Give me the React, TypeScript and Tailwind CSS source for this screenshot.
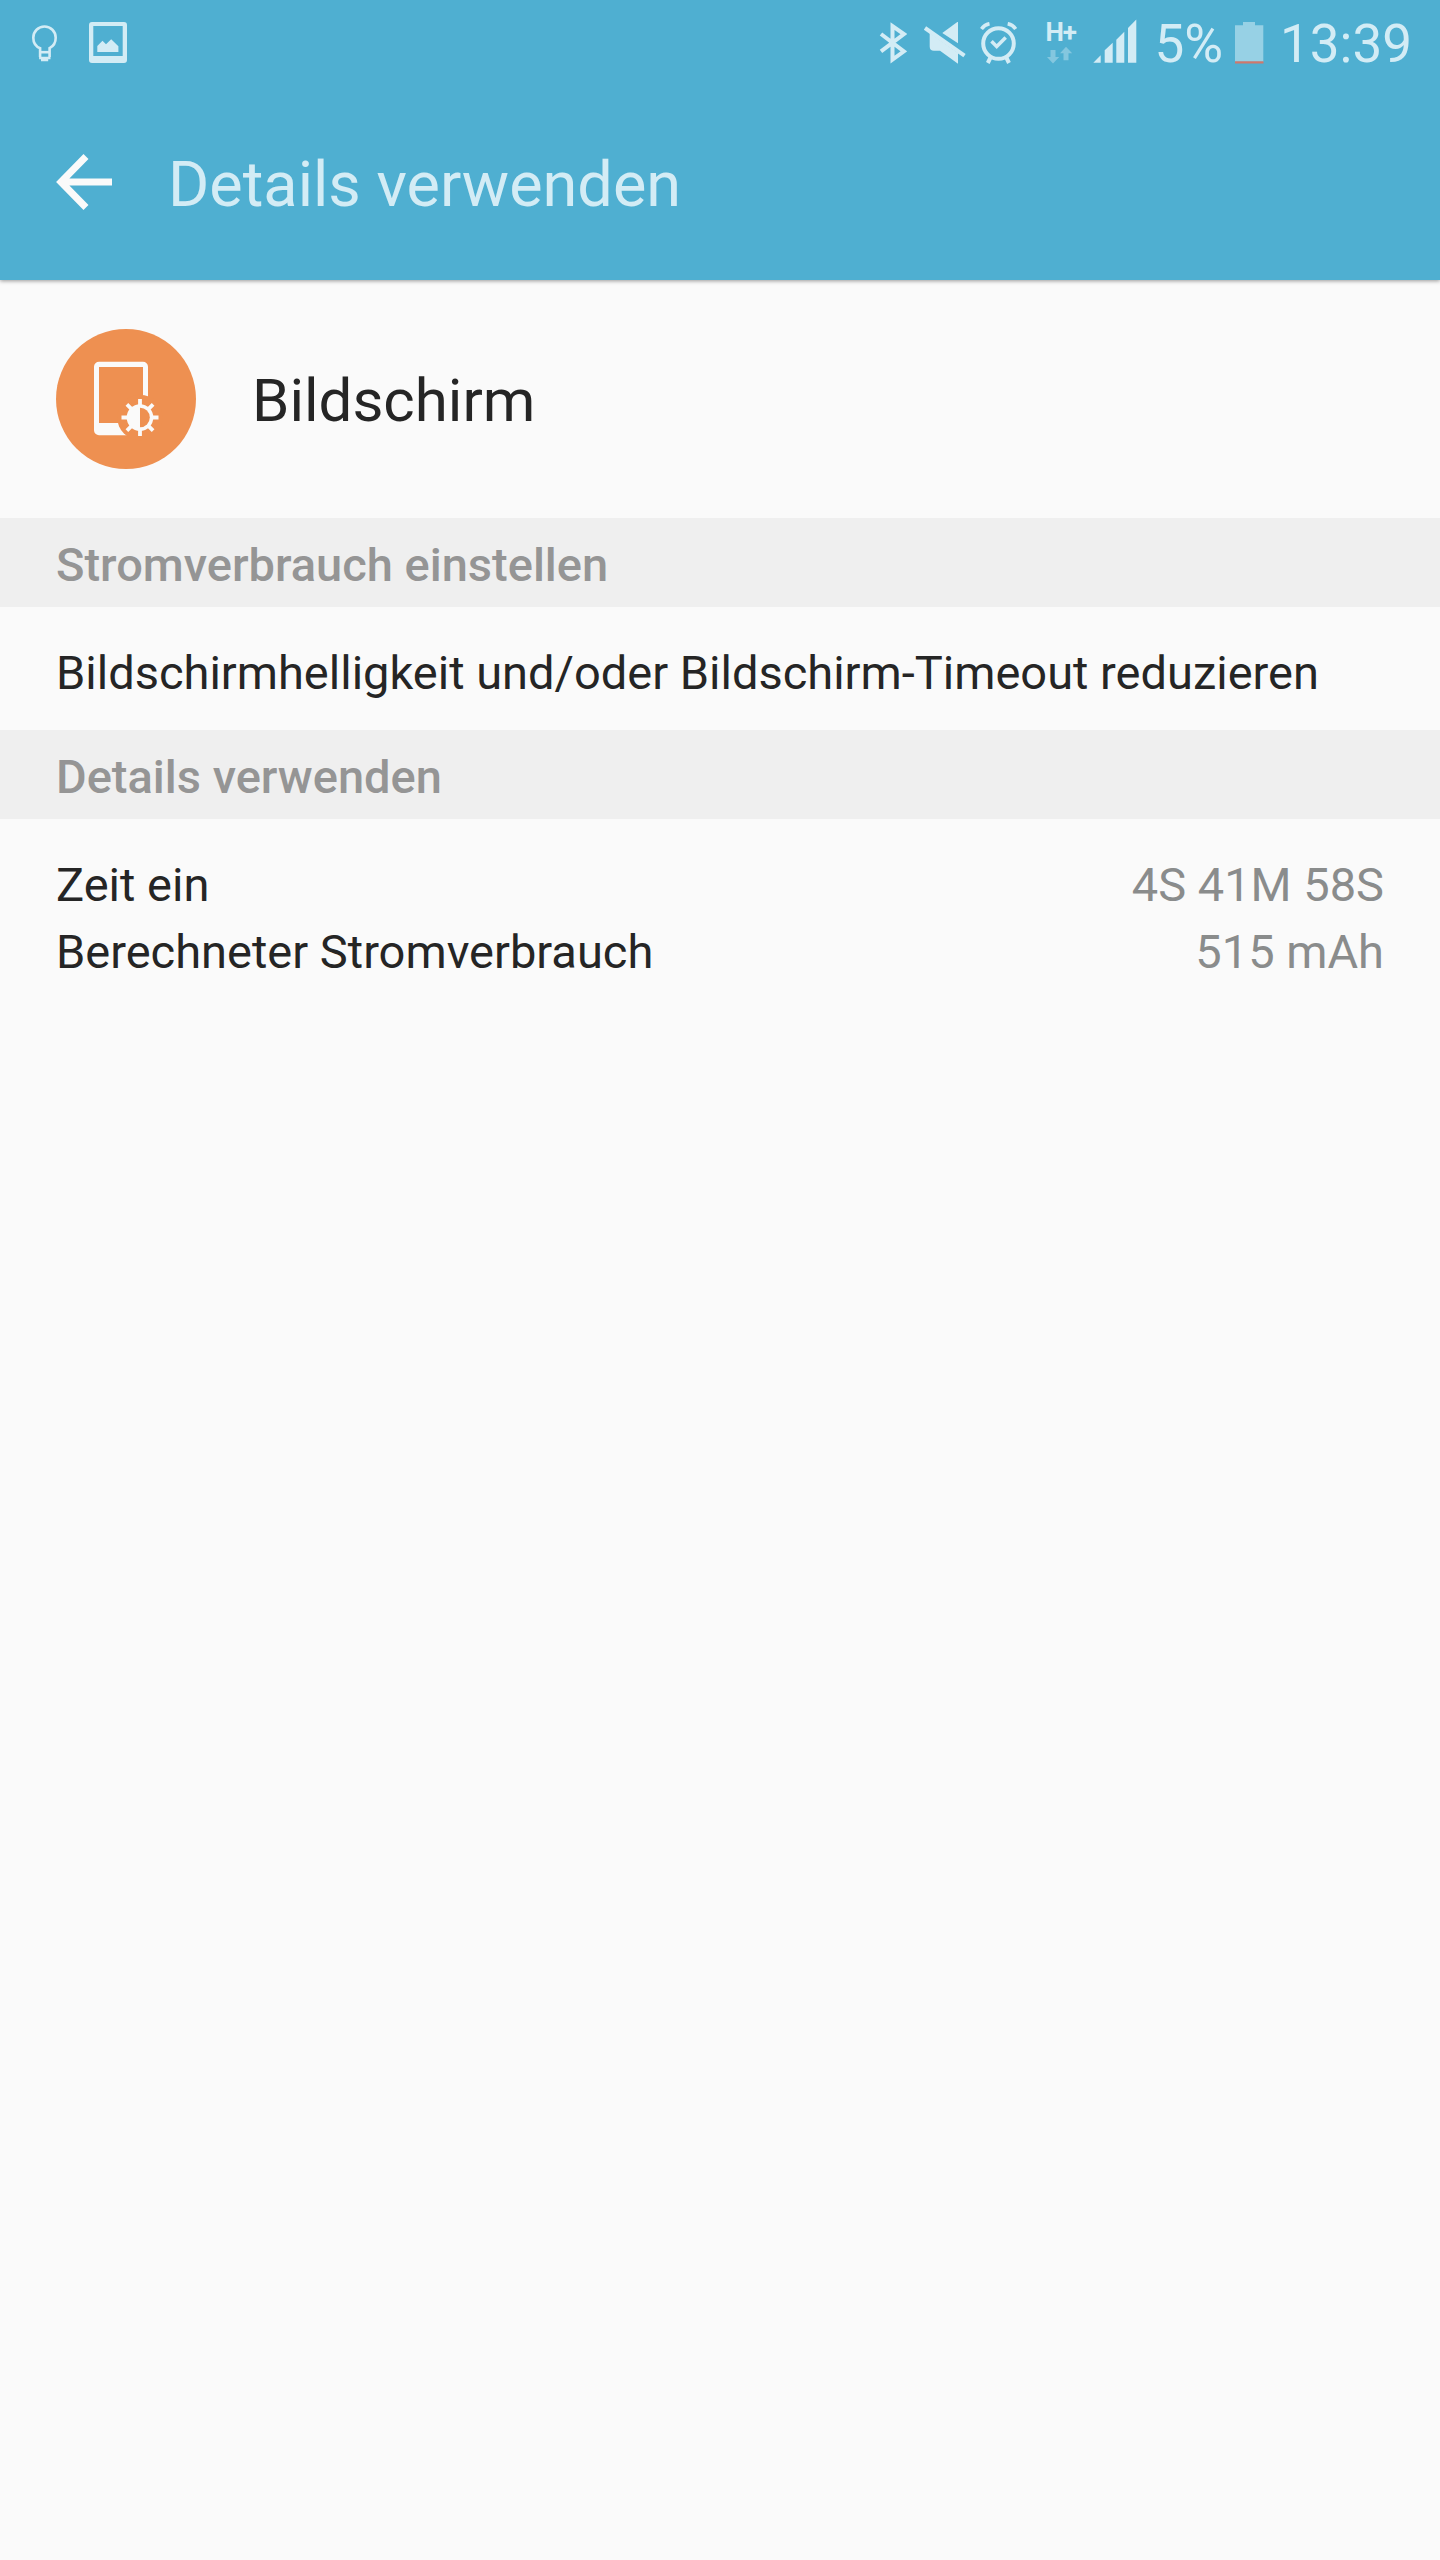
import React from 'react';

interface DetailRow {
  label: string;
  value: string;
}

const details: DetailRow[] = [
  { label: 'Zeit ein', value: '4S 41M 58S' },
  { label: 'Berechneter Stromverbrauch', value: '515 mAh' },
];

const BulbIcon = () => (
  <svg className="h-[38px] w-[26px]" viewBox="0 0 26 38" fill="none" stroke="currentColor" strokeWidth="2.6">
    <path d="M8.1 33V24.2C4 22.5 1.3 18.7 1.3 13.7a11.2 11.2 0 0 1 22.4 0c0 4.9-2.8 8.7-6.1 10.4V33" />
    <path d="M8 28.2h10" />
    <path d="M7.1 34h11.4M9 36h7.2" />
  </svg>
);

const ImageIcon = () => (
  <svg className="ml-[31px] h-[42px] w-[38px]" viewBox="0 0 38 42" fill="currentColor">
    <path fillRule="evenodd" d="M3 0h32a3 3 0 0 1 3 3v35a3 3 0 0 1-3 3H3a3 3 0 0 1-3-3V3a3 3 0 0 1 3-3zM4.3 4v30h29.4V4z" />
    <path d="M8.3 30v-6l5.2-5.2 3.5 3.4 5.2-5 7.2 7V30z" />
  </svg>
);

const BluetoothIcon = () => (
  <svg className="h-[42px] w-7" viewBox="879 22 28 42" fill="none" stroke="currentColor" strokeWidth="4">
    <path d="M881 34l22.9 17.3-11.4 8.2V26l11.4 8L881 51.3" strokeMiterlimit="10" />
  </svg>
);

const MuteIcon = () => (
  <svg className="ml-4 h-[42px] w-[43px]" viewBox="923 22 43 42" fill="currentColor">
    <path d="M942.3 33l15.7-11.5v21.8z" />
    <path d="M929.7 33l28.3 20v10.7L940 50.7H934q-4.3 0-4.3-4.3z" />
    <path d="M925 28l39.5 27.7" stroke="currentColor" strokeWidth="4" />
  </svg>
);

const AlarmIcon = () => (
  <svg className="ml-3.5 h-[42px] w-[38px]" viewBox="980 22 38 42" fill="none" stroke="currentColor" strokeWidth="4">
    <circle cx="998.5" cy="43.5" r="15.3" />
    <path d="M991.5 41.3l5.2 5.2 9-9" strokeWidth="3.5" />
    <path d="M981.5 29q3-4.3 8-5.3M1007.7 23.7q5 1 8 5.3" strokeWidth="3.6" />
    <path d="M990.5 57.5l-2.7 5.5M1006.3 57.5l2.7 5.5" />
  </svg>
);

const NetworkIcon = () => (
  <div className="ml-[27px] flex h-[42px] w-[33px] flex-col items-start">
    <span className="h-[25px] text-[26px] leading-[20px] font-bold tracking-[-1px] whitespace-nowrap">H+</span>
    <svg className="ml-[2px] h-[17px] w-[26px] opacity-40" viewBox="1048 47 26 17" fill="currentColor">
      <path d="M1051.5 50h5v7h3.7l-6.2 6.5-6-6.5h3.5zM1064.5 60.3h5v-7h3.7l-6.2-6.5-6 6.5h3.5z" />
    </svg>
  </div>
);

const SignalIcon = () => (
  <svg className="mb-1 ml-[15px] h-11 w-11" viewBox="1093 19 44 44" fill="currentColor">
    <path d="M1093.3 62.7l7.4-7.4v7.4zM1104.7 62.7V50.3l8-7.6v20zM1116.3 62.7V39.7l8-8v31zM1128 62.7V28l8.3-8.5v43.2z" />
  </svg>
);

const BatteryIcon = () => (
  <svg className="ml-3 h-[42px] w-[29px]" viewBox="0 0.7 29 42">
    <path d="M8 0.7h12V4h8.3v36.5H0V4h8z" fill="#97d1e5" />
    <path d="M0 40h28.5v2.2H0z" fill="#d0776b" />
  </svg>
);

const StatusBar = () => (
  <div className="flex h-[86px] items-center justify-between pr-7 pl-8 text-[#d3ecf5]">
    <div className="flex items-center">
      <BulbIcon />
      <ImageIcon />
    </div>
    <div className="flex items-center">
      <BluetoothIcon />
      <MuteIcon />
      <AlarmIcon />
      <NetworkIcon />
      <SignalIcon />
      <span className="ml-[17px] pt-0.5 text-[53px] leading-none">5%</span>
      <BatteryIcon />
      <span className="ml-4 pt-0.5 text-[53px] leading-none">13:39</span>
    </div>
  </div>
);

const DisplayIcon = () => (
  <svg className="h-[140px] w-[140px]" viewBox="56 329 140 140">
    <circle cx="126" cy="399" r="70" fill="#ee9051" />
    <path
      fillRule="evenodd"
      fill="#fafafa"
      d="M99 361.7h44a5 5 0 0 1 5 5V430.3a5 5 0 0 1-5 5H99a5 5 0 0 1-5-5V366.7a5 5 0 0 1 5-5zM99 367v56h44v-56z"
    />
    <circle cx="140" cy="417.5" r="22.7" fill="#ee9051" />
    <g stroke="#fafafa" strokeWidth="3.8">
      <path d="M140 399v37M121.5 417.5h37M126.9 404.4l26.2 26.2M153.1 404.4l-26.2 26.2" />
    </g>
    <circle cx="140" cy="417.5" r="13.3" fill="#fafafa" />
    <path d="M140 407.7a9.8 9.8 0 0 1 0 19.6z" fill="#ee9051" />
  </svg>
);

const SectionHeader: React.FC<{ title: string }> = ({ title }) => (
  <h2 className="flex h-[89px] items-center bg-[#efefef] px-14 pt-[3px] text-[47px] leading-none font-medium text-[#959595]">
    {title}
  </h2>
);

export default function App() {
  return (
    <div className="min-h-[2560px] w-[1440px] bg-[#fafafa] font-[Roboto,sans-serif] text-[#252525]">
      <header className="relative h-[280px] bg-[#4fafd1] shadow-[0_1px_4px_rgba(0,0,0,0.4)]">
        <StatusBar />
        <div className="flex items-start px-14 pt-[61px]">
          <button className="mt-[7px] block">
            <svg className="h-14 w-14" viewBox="0 0 56 56" fill="none" stroke="#fafafa" strokeWidth="7">
              <path d="M30 2.5L5 28l25 25.5M5 28h51" />
            </svg>
          </button>
          <h1 className="ml-14 text-[63px] leading-[75px] text-[#d3ecf5]">Details verwenden</h1>
        </div>
      </header>

      <main>
        <div className="flex h-[238px] items-center px-14">
          <DisplayIcon />
          <span className="ml-14 pt-1 text-6xl">Bildschirm</span>
        </div>

        <SectionHeader title="Stromverbrauch einstellen" />
        <p className="flex h-[123px] items-center px-14 pt-[7px] text-[47px] leading-none">
          Bildschirmhelligkeit und/oder Bildschirm-Timeout reduzieren
        </p>

        <SectionHeader title="Details verwenden" />
        <dl className="px-14 pt-8 text-[47px] leading-[67px]">
          {details.map(({ label, value }) => (
            <div key={label} className="flex justify-between">
              <dt>{label}</dt>
              <dd className="text-[#8a8c8c]">{value}</dd>
            </div>
          ))}
        </dl>
      </main>
    </div>
  );
}
